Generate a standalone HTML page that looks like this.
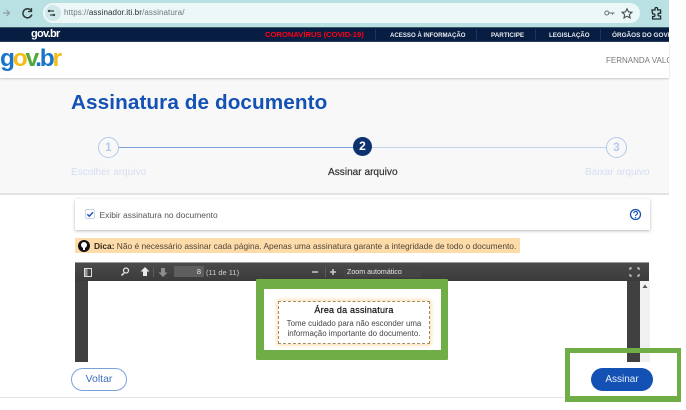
<!DOCTYPE html>
<html lang="pt">
<head>
<meta charset="utf-8">
<title>Assinatura de documento</title>
<style>
html,body{margin:0;padding:0;background:#fff}
body{width:686px;height:410px;position:relative;overflow:hidden;font-family:"Liberation Sans",sans-serif}
.a{position:absolute;white-space:nowrap}
#p{position:absolute;left:0;top:0;width:686px;height:410px;overflow:hidden;filter:blur(.35px)}
</style>
</head>
<body>
<div id="p">
<!-- browser toolbar -->
<div class="a" style="left:0;top:0;width:669px;height:27px;background:#b9e0e3"></div>
<div class="a" style="left:43px;top:3px;width:597px;height:20px;border-radius:10px;background:#ecf7f7"></div>
<div class="a" style="left:45px;top:5px;width:16px;height:16px;border-radius:8px;background:#cfe8ea"></div>
<svg class="a" style="left:0;top:0" width="80" height="27" fill="none" stroke="#5f6b6c">
<path d="M3 13h6M6.500 10l3 3-3 3" stroke="#8f9d9e" stroke-width="1.200"/>
<path d="M31 10.500a4.500 4.500 0 1 0 .8 4" stroke="#33393a" stroke-width="1.500"/>
<path d="M31.500 8v3.500H28" stroke="#33393a" stroke-width="1.300"/>
<path d="M49 11h5M50 15h4" stroke="#3a4445" stroke-width="1.200"/>
<circle cx="49" cy="11" r="1.200" fill="#3a4445" stroke="none"/>
<circle cx="54" cy="15" r="1.200" fill="#3a4445" stroke="none"/>
</svg>
<div class="a" style="left:64px;top:7.500px;font-size:8px;line-height:10px;color:#6d7778;letter-spacing:.1px">https://<span style="color:#2a3031">assinador.iti.br</span>/assinatura/</div>
<svg class="a" style="left:600px;top:4px" width="70" height="20" fill="none" stroke="#6a7273">
<circle cx="6.800" cy="9" r="2" stroke-width="1"/>
<path d="M9 9h5.500M12.500 9v1.800" stroke-width="1.100"/>
<path d="M27 4.800l1.500 3.100 3.400.4-2.500 2.300.7 3.300-3.100-1.700-3 1.700.6-3.300-2.500-2.300 3.400-.4z" stroke="#444c4d" stroke-width="1.100"/>
<path d="M52 6h3V4.800a1.300 1.300 0 0 1 2.600 0V6h3v3.200h-1.200a1.400 1.400 0 0 0 0 2.800h1.200v3h-8v-2.500h1a1.300 1.300 0 0 0 0-2.600h-1z" stroke="#23292a" stroke-width="1.300"/>
</svg>

<!-- gov nav -->
<div class="a" style="left:0;top:27px;width:669px;height:15px;background:#071d41;border-top:1px solid #3d5a6b;border-bottom:1px solid #2c4060;box-sizing:border-box"></div>
<div class="a" style="left:31px;top:28px;font-size:11px;line-height:12px;font-weight:bold;color:#fff;letter-spacing:-.7px">gov.br</div>
<div class="a" style="left:265px;top:30px;font-size:7.700px;line-height:10px;font-weight:bold;color:#ff0018;letter-spacing:-.05px">CORONAVÍRUS (COVID-19)</div>
<div class="a" style="left:375px;top:29px;width:1px;height:11px;background:#1c3459"></div>
<div class="a" style="left:476px;top:29px;width:1px;height:11px;background:#1c3459"></div>
<div class="a" style="left:535px;top:29px;width:1px;height:11px;background:#1c3459"></div>
<div class="a" style="left:600px;top:29px;width:1px;height:11px;background:#1c3459"></div>
<div class="a" style="left:390px;top:31px;font-size:6.100px;line-height:9px;font-weight:bold;color:#e8ebf0">ACESSO À INFORMAÇÃO</div>
<div class="a" style="left:491px;top:31px;font-size:6.300px;line-height:9px;font-weight:bold;color:#e8ebf0">PARTICIPE</div>
<div class="a" style="left:549px;top:31px;font-size:6.200px;line-height:9px;font-weight:bold;color:#e8ebf0">LEGISLAÇÃO</div>
<div class="a" style="left:612px;top:31px;width:57px;overflow:hidden;font-size:6.400px;line-height:9px;font-weight:bold;color:#e8ebf0">ÓRGÃOS DO GOVERNO</div>

<!-- header -->
<div class="a" style="left:0;top:42px;width:669px;height:36px;background:#fff;box-shadow:0 1px 2px rgba(0,0,0,.2);z-index:2"></div>
<div class="a" style="left:0;top:44px;font-size:24.500px;line-height:30px;font-weight:bold;letter-spacing:-2.200px;z-index:3"><span style="color:#1a74c9">g</span><span style="color:#f4bd13">o</span><span style="color:#53a83a">v</span><span style="color:#1a74c9">.b</span><span style="color:#f4bd13">r</span></div>
<div class="a" style="left:606px;top:56px;width:63px;overflow:hidden;font-size:8px;line-height:10px;color:#777;z-index:3">FERNANDA VALQUIRIA</div>

<!-- title section -->
<div class="a" style="left:0;top:78px;width:669px;height:117px;background:#f8f8f8;border-bottom:2px solid #e3e3e3;box-sizing:border-box"></div>
<div class="a" style="left:71px;top:90px;font-size:20.700px;line-height:26px;font-weight:bold;color:#1351b4;letter-spacing:.1px">Assinatura de documento</div>

<!-- stepper -->
<div class="a" style="left:119px;top:147px;width:235px;height:1px;background:#7ca2de"></div>
<div class="a" style="left:372px;top:147px;width:235px;height:1px;background:#c3d3ee"></div>
<div class="a" style="left:98px;top:137px;width:21px;height:21px;border:1px solid #b3c9ec;border-radius:50%;box-sizing:border-box;text-align:center;font-size:12px;line-height:19px;font-weight:bold;color:#b8cbec;background:#f8f8f8">1</div>
<div class="a" style="left:353px;top:137px;width:19px;height:19px;border-radius:50%;text-align:center;font-size:12px;line-height:19px;font-weight:bold;color:#fff;background:#0c326f">2</div>
<div class="a" style="left:606px;top:137px;width:21px;height:21px;border:1px solid #b3c9ec;border-radius:50%;box-sizing:border-box;text-align:center;font-size:12px;line-height:19px;font-weight:bold;color:#b8cbec;background:#f8f8f8">3</div>
<div class="a" style="left:71px;top:165.500px;font-size:10.100px;line-height:13px;color:#d3def2">Escolher arquivo</div>
<div class="a" style="left:328px;top:165.500px;font-size:10.100px;line-height:13px;color:#333;-webkit-text-stroke:.2px #333">Assinar arquivo</div>
<div class="a" style="left:585px;top:165.500px;font-size:10.100px;line-height:13px;color:#d3def2">Baixar arquivo</div>

<!-- card -->
<div class="a" style="left:75px;top:199px;width:575px;height:31px;background:#fff;box-shadow:0 1px 3px rgba(0,0,0,.28)"></div>
<div class="a" style="left:85px;top:209px;width:10px;height:10px;border:1px solid #c9d3e3;border-radius:2px;box-sizing:border-box;background:#fff"></div>
<svg class="a" style="left:85px;top:209px" width="10" height="10" fill="none"><path d="M2.300 5.300l2 1.900 3.700-4" stroke="#1351b4" stroke-width="1.400"/></svg>
<div class="a" style="left:99.500px;top:209.500px;font-size:8.450px;line-height:11px;color:#555">Exibir assinatura no documento</div>
<svg class="a" style="left:629px;top:208px" width="13" height="13" fill="none"><circle cx="6.500" cy="6.500" r="5" stroke="#1351b4" stroke-width="1.300"/><path d="M4.800 5.200a1.800 1.700 0 1 1 2.600 1.500c-.7.400-.9.700-.9 1.300" stroke="#1351b4" stroke-width="1.100"/><circle cx="6.500" cy="9.600" r=".7" fill="#1351b4"/></svg>

<!-- tip -->
<div class="a" style="left:75px;top:238px;width:445px;height:15px;background:#fedcaa"></div>
<div class="a" style="left:78px;top:240px;width:12px;height:12px;border-radius:50%;background:#111"></div>
<div class="a" style="left:81px;top:242px;width:6px;height:6px;border-radius:50%;background:#fff"></div>
<div class="a" style="left:83px;top:247px;width:2px;height:3px;background:#fff"></div>
<div class="a" style="left:94px;top:240.500px;font-size:8.400px;line-height:11px;color:#4f4338"><b style="color:#33291f">Dica:</b> Não é necessário assinar cada página. Apenas uma assinatura garante a integridade de todo o documento.</div>

<!-- pdf viewer -->
<div class="a" style="left:75px;top:262px;width:574px;height:100px;background:#404040"></div>
<div class="a" style="left:75px;top:262px;width:574px;height:19px;background:linear-gradient(#4a4a4a,#3b3b3b);border-top:1px solid #9a9a9a;box-sizing:border-box"></div>
<div class="a" style="left:88px;top:281px;width:539px;height:81px;background:#fff"></div>
<div class="a" style="left:640px;top:281px;width:10px;height:81px;background:#f0f0f0"></div>
<svg class="a" style="left:641px;top:283px" width="8" height="6"><path d="M1.500 5L4 1.500 6.500 5z" fill="#555"/></svg>
<svg class="a" style="left:75px;top:262px" width="574" height="19" fill="none">
<rect x="9.500" y="6.500" width="7" height="8" stroke="#ddd"/><rect x="10" y="7" width="2.500" height="7" fill="#999"/>
<circle cx="51" cy="8.500" r="2.500" stroke="#e8e8e8" stroke-width="1.200"/><path d="M49 11l-2.500 2.500" stroke="#e8e8e8" stroke-width="1.500"/>
<path d="M70 5l4.500 4.500H72V14h-4V9.500h-2.500z" fill="#e8e8e8"/>
<path d="M88 15l-4.500-4.500H86V6h4v4.500h2.500z" fill="#8d8d8d"/>
<path d="M78.500 5v10M250.500 5v10" stroke="#5c5c5c"/>
<path d="M237 10h6" stroke="#ddd" stroke-width="1.300"/>
<path d="M255 10h6M258 7v6" stroke="#ddd" stroke-width="1.300"/>
<path d="M336 7.500l1.800-1.800 1.800 1.800M336 12.500l1.800 1.800 1.800-1.800" stroke="#ccc" stroke-width=".8"/>
<path d="M555 8V6h2M562 6h2V8M555 12v2h2M562 14h2V12" stroke="#e0e0e0" stroke-width="1.100"/>
</svg>
<div class="a" style="left:174px;top:266px;width:30px;height:11px;background:#5e5e5e;border-radius:1px;text-align:right;font-size:7.500px;line-height:11px;color:#e0e0e0;box-sizing:border-box;padding-right:3px">8</div>
<div class="a" style="left:206px;top:266.500px;font-size:7.500px;line-height:11px;color:#cfcfcf">(11 de 11)</div>
<div class="a" style="left:344px;top:266px;width:77px;height:11px;background:#454545"></div>
<div class="a" style="left:347px;top:266.500px;font-size:7.100px;line-height:11px;color:#e6e6e6">Zoom automático</div>

<!-- signature highlight -->
<div class="a" style="left:256px;top:279px;width:192px;height:81px;background:#6fae47;border-radius:1px"></div>
<div class="a" style="left:264px;top:289px;width:177px;height:61px;background:#fff"></div>
<div class="a" style="left:278px;top:301px;width:152px;height:43px;border:1px dashed #a08e62;box-sizing:border-box;box-shadow:0 0 4px 1px #fbd9a6;background:#fff;text-align:center;color:#444">
<div style="font-size:9px;line-height:11px;color:#111;margin-top:3px;-webkit-text-stroke:.2px #111;letter-spacing:.2px">Área da assinatura</div>
<div style="font-size:7.900px;line-height:10px;margin-top:3px">Tome cuidado para não esconder uma<br>informação importante do documento.</div>
</div>

<!-- footer -->
<div class="a" style="left:0;top:397px;width:565px;height:1px;background:#dfe5ea"></div>
<div class="a" style="left:71px;top:368px;width:56px;height:23px;border:1px solid #7ca2de;border-radius:12px;box-sizing:border-box;background:#fff;text-align:center;font-size:10.500px;line-height:21px;color:#3f6fc0">Voltar</div>
<div class="a" style="left:565px;top:348px;width:116px;height:54px;border:solid #6fae47;border-width:5px 4px 6px 5px;box-sizing:border-box"></div>
<div class="a" style="left:591px;top:368px;width:62px;height:23px;border-radius:12px;background:#1351b4;text-align:center;font-size:10px;line-height:23px;color:#e6eefa">Assinar</div>
</div>
</body>
</html>
